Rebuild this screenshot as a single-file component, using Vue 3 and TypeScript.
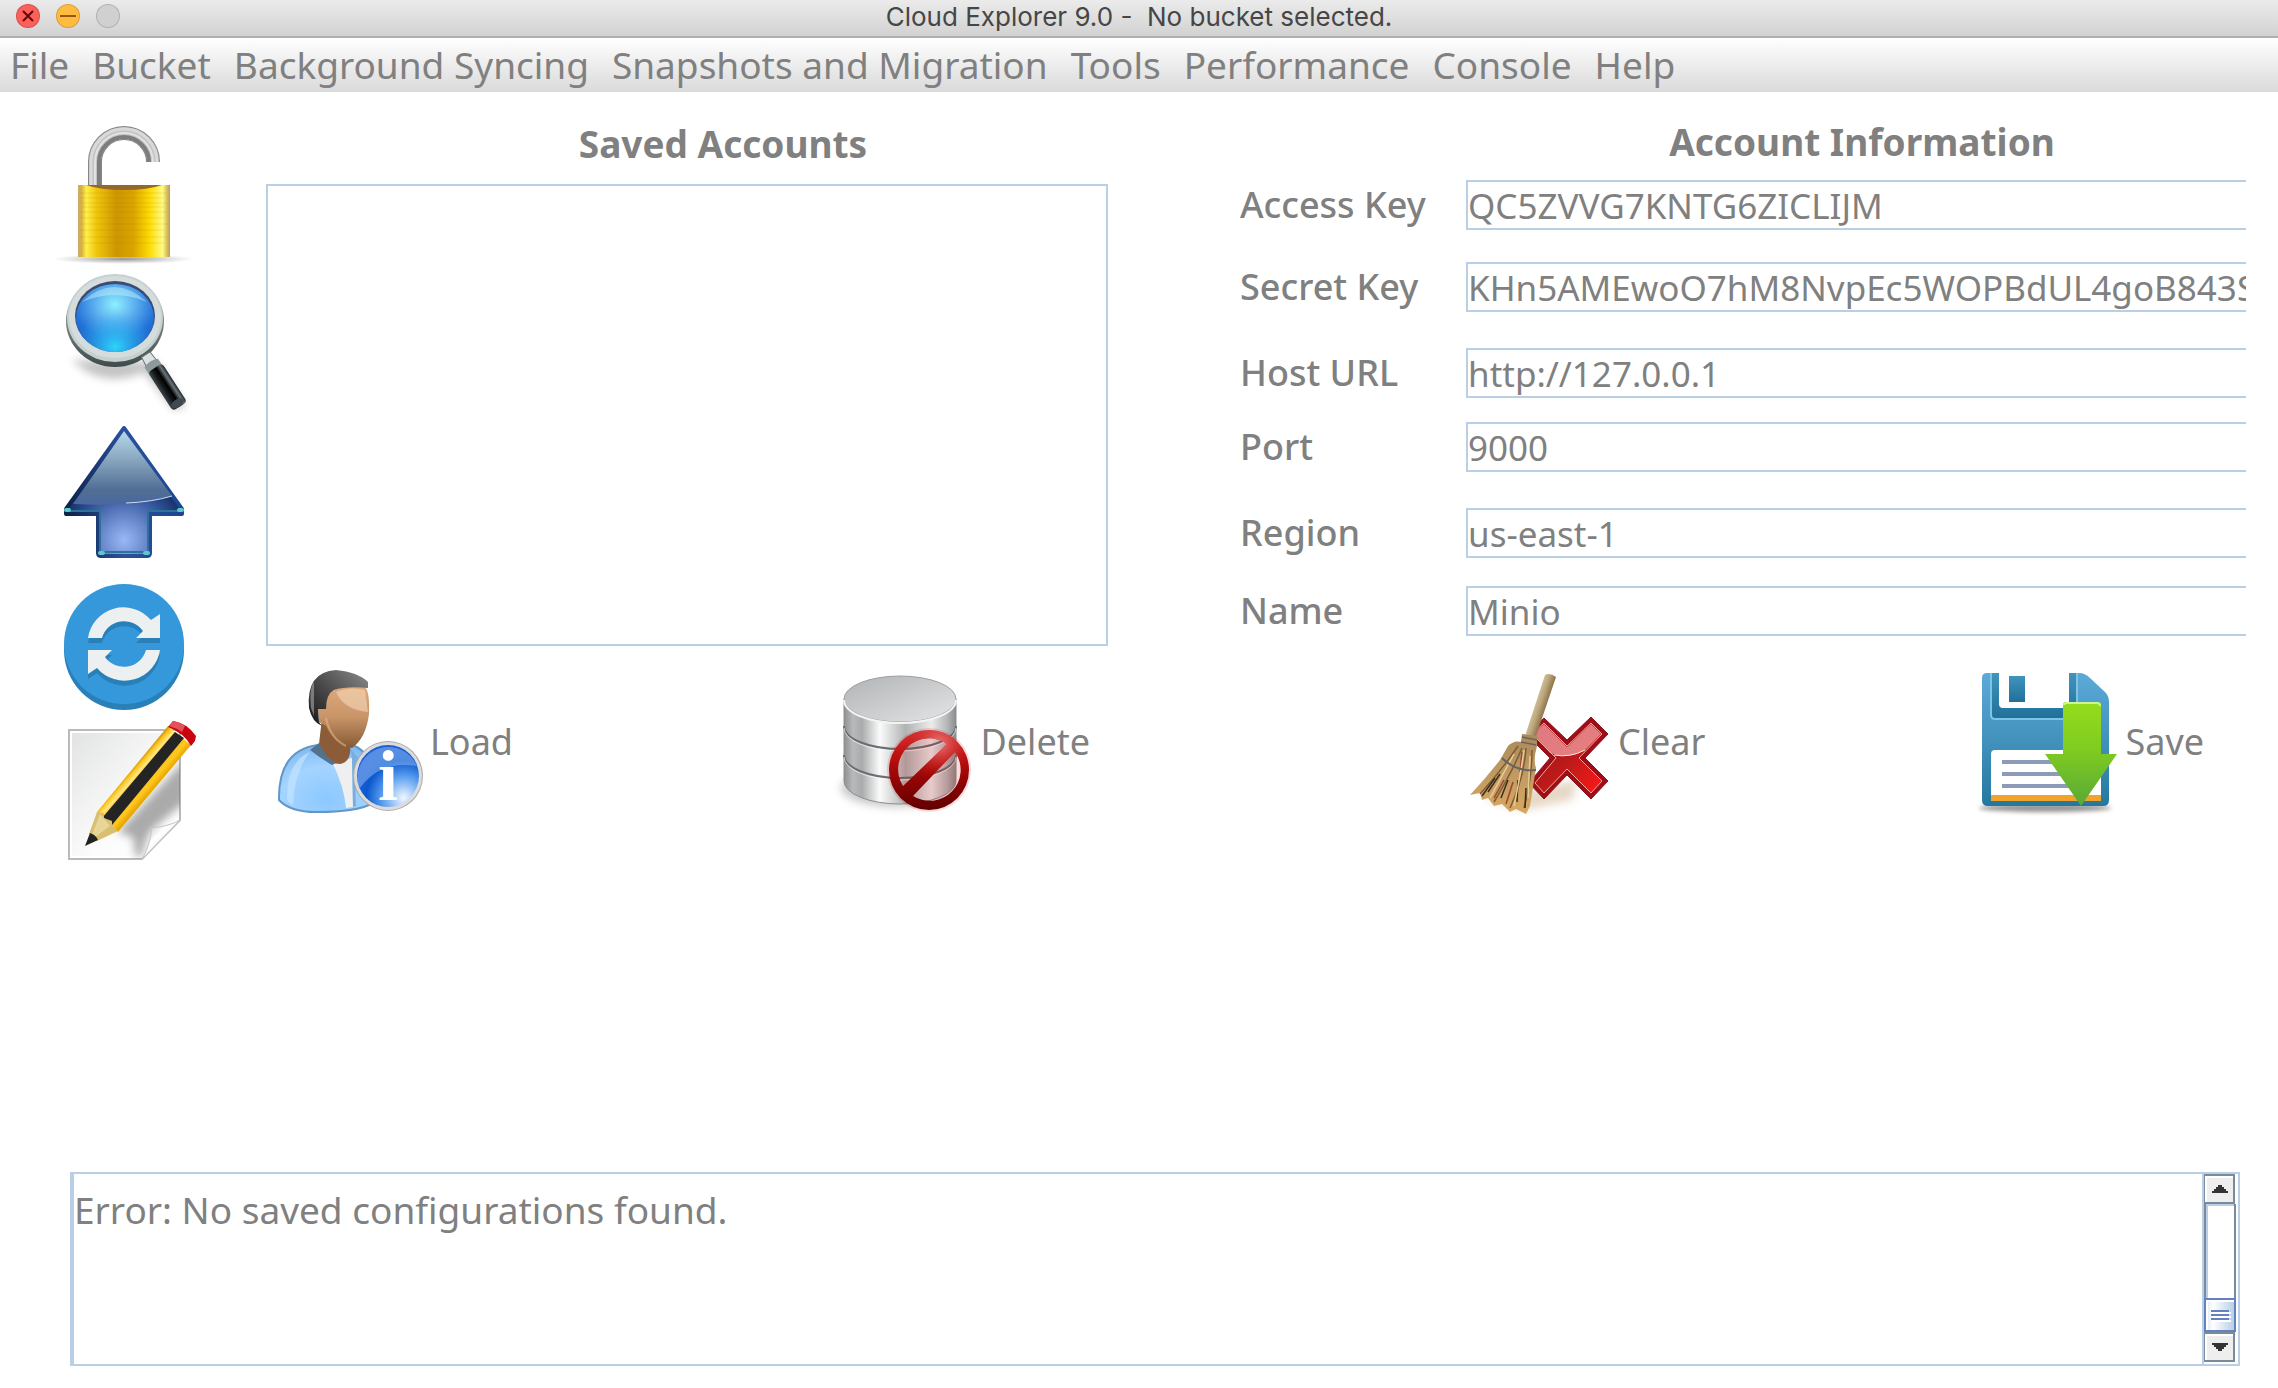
<script setup lang="ts">
import { reactive, ref } from 'vue'

interface Field {
  id: string
  label: string
}

const menus: string[] = [
  'File',
  'Bucket',
  'Background Syncing',
  'Snapshots and Migration',
  'Tools',
  'Performance',
  'Console',
  'Help',
]

const fields: Field[] = [
  { id: 'access', label: 'Access Key' },
  { id: 'secret', label: 'Secret Key' },
  { id: 'host', label: 'Host URL' },
  { id: 'port', label: 'Port' },
  { id: 'region', label: 'Region' },
  { id: 'name', label: 'Name' },
]

const account = reactive<Record<string, string>>({
  access: 'QC5ZVVG7KNTG6ZICLIJM',
  secret: 'KHn5AMEwoO7hM8NvpEc5WOPBdUL4goB843S',
  host: 'http://127.0.0.1',
  port: '9000',
  region: 'us-east-1',
  name: 'Minio',
})

const log = ref('Error: No saved configurations found.')

function clearFields(): void {
  for (const field of fields) account[field.id] = ''
}
</script>

<template>
  <div class="window">
    <header class="titlebar">
      <div class="lights">
        <button class="light close" type="button" aria-label="Close">
          <svg viewBox="0 0 24 24"><path d="M7 7 17 17M17 7 7 17" /></svg>
        </button>
        <button class="light minimise" type="button" aria-label="Minimise">
          <svg viewBox="0 0 24 24"><path d="M4 12H20" /></svg>
        </button>
        <button class="light zoom" type="button" aria-label="Zoom" disabled></button>
      </div>
      <h1 class="title">Cloud Explorer 9.0 -&nbsp; No bucket selected.</h1>
    </header>

    <nav class="menubar">
      <button v-for="menu in menus" :key="menu" class="menu" type="button">{{ menu }}</button>
    </nav>

    <main class="content">
      <aside class="tools">
        <button class="tool" type="button" aria-label="Accounts">
          <svg class="icon" viewBox="0 0 148 148">
            <defs>
              <linearGradient id="brass" x1="0" x2="1" y1="0" y2="0">
                <stop offset="0" stop-color="#c9ab68" />
                <stop offset=".04" stop-color="#d8b23c" />
                <stop offset=".09" stop-color="#fff04c" />
                <stop offset=".2" stop-color="#f0c60c" />
                <stop offset=".42" stop-color="#cb9600" />
                <stop offset=".6" stop-color="#d9a400" />
                <stop offset=".78" stop-color="#fddc04" />
                <stop offset=".92" stop-color="#fffc86" />
                <stop offset=".96" stop-color="#e0c65a" />
                <stop offset="1" stop-color="#b99a68" />
              </linearGradient>
              <radialGradient id="floor">
                <stop offset="0" stop-color="#777" stop-opacity=".8" />
                <stop offset="1" stop-color="#999" stop-opacity="0" />
              </radialGradient>
            </defs>
            <ellipse cx="71" cy="139" rx="71" ry="5" fill="url(#floor)" />
            <g fill="none">
              <path d="M43 68V42A29 29 0 0 1 101 42" stroke="#858585" stroke-width="14" />
              <path d="M43 68V42A29 29 0 0 1 101 42" stroke="#c3c3c3" stroke-width="12" />
              <path d="M39 68V42A33 33 0 0 1 105 42" stroke="#d9d9d9" stroke-width="3" />
              <path d="M47 68V42A25 25 0 0 1 97 42" stroke="#7d7d7d" stroke-width="4" />
              <path d="M43 68V42A29 29 0 0 1 101 42" stroke="#e2e2e2" stroke-width="2" />
            </g>
            <path d="M26 65H118V137H26Z" fill="url(#brass)" />
            <path d="M28 73H115M28 78H112M28 83H115M30 87H112M28 92H115M28 98H112M28 104H115M28 110H112M28 117H115M30 123H112" stroke="#a87800" stroke-opacity=".16" />
            <path d="M34 65H110Q96 70 72 70T34 65Z" fill="#94682a" />
          </svg>
        </button>
        <button class="tool" type="button" aria-label="Search">
          <svg class="icon" viewBox="0 0 148 148">
            <defs>
              <radialGradient id="lens" cx=".5" cy=".3" r=".72">
                <stop offset="0" stop-color="#8df0ff" />
                <stop offset=".32" stop-color="#63b6f0" />
                <stop offset=".72" stop-color="#2272d8" />
                <stop offset="1" stop-color="#1c5fc0" />
              </radialGradient>
              <radialGradient id="lensLow" cx=".5" cy=".92" r=".5">
                <stop offset="0" stop-color="#2fd4fb" />
                <stop offset="1" stop-color="#2fb4f5" stop-opacity="0" />
              </radialGradient>
              <linearGradient id="rim" x1="0" x2="0" y1="0" y2="1">
                <stop offset="0" stop-color="#a9b3b3" />
                <stop offset=".6" stop-color="#6f7a7a" />
                <stop offset="1" stop-color="#3f4a4c" />
              </linearGradient>
              <linearGradient id="grip" x1="0" x2="1" y1="0" y2="0">
                <stop offset="0" stop-color="#3c4548" />
                <stop offset=".3" stop-color="#14181a" />
                <stop offset=".55" stop-color="#000" />
                <stop offset=".8" stop-color="#69757b" />
                <stop offset="1" stop-color="#20282b" />
              </linearGradient>
              <filter id="haze" x="-30%" y="-30%" width="160%" height="160%">
                <feGaussianBlur stdDeviation="4" />
              </filter>
              <filter id="mist" x="-10%" y="-50%" width="120%" height="200%">
                <feGaussianBlur stdDeviation="2" />
              </filter>
            </defs>
            <path d="M20 92Q50 122 92 104L122 142 134 138 104 94Z" fill="#555" opacity=".35" filter="url(#haze)" />
            <ellipse cx="63" cy="53" rx="49" ry="46" fill="url(#rim)" />
            <ellipse cx="63" cy="50" rx="48" ry="44" fill="#c6d0cf" />
            <ellipse cx="63" cy="49" rx="46" ry="41" fill="#d5dddc" />
            <ellipse cx="63" cy="48" rx="40" ry="35" fill="#3c4a74" />
            <ellipse cx="63" cy="50" rx="39" ry="34" fill="url(#lens)" />
            <ellipse cx="63" cy="50" rx="39" ry="34" fill="url(#lensLow)" />
            <path d="M30 34Q62 4 95 34Q62 20 30 34Z" fill="#c5f6ff" opacity=".45" />
            <g transform="rotate(-33 96 90)">
              <path d="M91 86H101L102 96H90Z" fill="#dce2e2" stroke="#6a7475" />
              <path d="M88 96Q96 92 104 96V106H88Z" fill="#8e999b" />
              <rect x="88" y="102" width="17" height="46" rx="4" fill="url(#grip)" />
              <ellipse cx="96" cy="144" rx="7" ry="4" fill="#3e4a4f" />
            </g>
          </svg>
        </button>
        <button class="tool" type="button" aria-label="Upload">
          <svg class="icon" viewBox="0 0 148 148">
            <defs>
              <linearGradient id="gloss" x1="0" x2="0" y1="0" y2="1">
                <stop offset="0" stop-color="#b4d8ea" />
                <stop offset=".35" stop-color="#8eabc4" />
                <stop offset=".8" stop-color="#506e94" />
                <stop offset="1" stop-color="#4a689e" />
              </linearGradient>
              <radialGradient id="stem" gradientUnits="userSpaceOnUse" cx="72" cy="124" r="66">
                <stop offset="0" stop-color="#98b8f6" />
                <stop offset=".4" stop-color="#6080c4" />
                <stop offset=".7" stop-color="#33549a" />
                <stop offset="1" stop-color="#142c62" />
              </radialGradient>
              <linearGradient id="edge" x1="0" x2="1" y1="0" y2="0">
                <stop offset="0" stop-color="#0e2248" />
                <stop offset=".5" stop-color="#2a50a0" />
                <stop offset="1" stop-color="#1c4690" />
              </linearGradient>
            </defs>
            <path d="M72 12 130 93V98H98V137Q98 140 95 140H49Q46 140 46 137V98H14V93Z" fill="url(#stem)" stroke="url(#edge)" stroke-width="4" stroke-linejoin="round" />
            <path d="M72 15 120 80Q80 91 21 88Z" fill="url(#gloss)" />
            <path d="M120 80Q100 86 74 87" fill="none" stroke="#c8dcf4" />
            <path d="M15 95H48V136H96V95H129" fill="none" stroke="#2d7398" stroke-width="2" />
            <path d="M14 94H17M127 94H130M48 137H51M93 137H96" stroke="#5cc8cc" stroke-width="4" stroke-linecap="round" />
          </svg>
        </button>
        <button class="tool" type="button" aria-label="Refresh">
          <svg class="icon" viewBox="0 -4 148 148">
            <circle cx="72" cy="82" r="60" fill="#2980b9" />
            <circle cx="72" cy="76" r="60" fill="#3498db" />
            <g fill="#2980b9">
              <path d="M36 75A36 36 0 0 1 99 57L108 51V75H84L91 68A23 23 0 0 0 50 75Z" />
              <path d="M108 87A36 36 0 0 1 45 105L36 111V87H60L53 94A23 23 0 0 0 94 87Z" />
            </g>
            <g fill="#ecf0f1">
              <path d="M36 70A36 36 0 0 1 99 52L108 46V70H84L91 63A23 23 0 0 0 50 70Z" />
              <path d="M108 82A36 36 0 0 1 45 100L36 106V82H60L53 89A23 23 0 0 0 94 82Z" />
            </g>
          </svg>
        </button>
        <button class="tool" type="button" aria-label="Edit">
          <svg class="icon" viewBox="0 -4 148 148">
            <defs>
              <linearGradient id="paper" x1="0" x2="1" y1="0" y2="1">
                <stop offset="0" stop-color="#e2e4e3" />
                <stop offset=".6" stop-color="#fcfcfc" />
                <stop offset="1" stop-color="#fff" />
              </linearGradient>
              <linearGradient id="curl" x1="0" x2="1" y1="0" y2="1">
                <stop offset="0" stop-color="#9a9a9a" />
                <stop offset=".4" stop-color="#fff" />
                <stop offset="1" stop-color="#d4d4d4" />
              </linearGradient>
              <linearGradient id="barrel" gradientUnits="userSpaceOnUse" x1="80" y1="53" x2="102" y2="72">
                <stop offset="0" stop-color="#d89c10" />
                <stop offset=".1" stop-color="#ffc81e" />
                <stop offset=".25" stop-color="#ffe88a" />
                <stop offset=".35" stop-color="#f4b80a" />
                <stop offset=".8" stop-color="#ffc820" />
                <stop offset="1" stop-color="#e8a800" />
              </linearGradient>
              <clipPath id="sheet"><path d="M17 14H128V104L90 143H17Z" /></clipPath>
            </defs>
            <path d="M17 14H128V104L90 143H17Z" fill="#fff" stroke="#b9bab9" stroke-width="2" />
            <path d="M20 17H125V102L89 140H20Z" fill="url(#paper)" />
            <g clip-path="url(#sheet)">
              <path d="M66 116 140 36 138 82 102 112Q94 118 90 142L82 138Q86 118 70 118Z" fill="#666" opacity=".55" filter="url(#haze)" />
            </g>
            <path d="M128 104Q118 110 100 112Q98 130 90 143Z" fill="url(#curl)" stroke="#c2c6c6" />
            <path d="M45 96 116 10 139 29 66 116Z" fill="url(#barrel)" />
            <path d="M51 101 123 16 132 22 60 109Z" fill="#242424" />
            <path d="M45 96 52 97 52 102 60 105 60 110 66 115 45 125 37 118Z" fill="#d9c070" />
            <path d="M48 98 40 119 43 121 58 110Z" fill="#ece0a8" opacity=".7" />
            <path d="M38 117Q44 119 46 124L33 130Z" fill="#222" />
            <path d="M116 11 121 5Q135 7 144 20L143 25 139 30Q132 17 116 11Z" fill="#c8040e" />
            <path d="M117 10 121 5Q128 6 133 10L130 16Q124 12 117 10Z" fill="#e2525a" />
          </svg>
        </button>
      </aside>

      <section class="saved">
        <h2 class="heading">Saved Accounts</h2>
        <select class="accounts" size="8" aria-label="Saved Accounts"></select>
        <div class="actions">
          <button class="action" type="button">
            <svg class="icon" viewBox="0 0 148 148">
              <defs>
                <linearGradient id="skin" x1="0" x2="0" y1="0" y2="1">
                  <stop offset="0" stop-color="#deaa7c" />
                  <stop offset=".5" stop-color="#c89468" />
                  <stop offset="1" stop-color="#865a34" />
                </linearGradient>
                <radialGradient id="shirt" cx=".5" cy=".8" r=".8">
                  <stop offset="0" stop-color="#8cc8ff" />
                  <stop offset=".6" stop-color="#a4d4ff" />
                  <stop offset="1" stop-color="#80baf0" />
                </radialGradient>
                <linearGradient id="hair" x1="0" x2="1" y1="1" y2="0">
                  <stop offset="0" stop-color="#161616" />
                  <stop offset=".5" stop-color="#4c4c4c" />
                  <stop offset="1" stop-color="#8c8c8c" />
                </linearGradient>
                <radialGradient id="info" cx=".75" cy=".85" r=".75">
                  <stop offset="0" stop-color="#f0f8ff" />
                  <stop offset=".45" stop-color="#5ea0f0" />
                  <stop offset=".8" stop-color="#0a58d0" />
                  <stop offset="1" stop-color="#1c60d4" />
                </radialGradient>
              </defs>
              <path d="M3 132Q2 82 42 77H76Q100 84 100 132Q90 144 40 144Q14 144 3 132Z" fill="url(#shirt)" stroke="#6298c8" stroke-width="2" />
              <path d="M11 132Q10 94 34 84Q18 104 17 138Z" fill="#c2e4ff" opacity=".7" />
              <path d="M56 94 76 90 77 139 70 140Q68 118 56 94Z" fill="#efefef" />
              <path d="M76 90 74 80 84 92Q78 112 80 138L77 139Z" fill="#78aee0" />
              <path d="M46 50 43 76Q50 96 64 96Q76 94 74 76Z" fill="#8c5c38" />
              <path d="M34 82 43 75Q50 90 60 95L56 97Q44 90 34 82Z" fill="#53728e" />
              <path d="M42 40Q50 16 88 18Q94 22 93 46Q90 70 76 80Q58 76 50 58L43 54Z" fill="url(#skin)" />
              <path d="M60 24Q74 18 89 22L92 44Q68 42 60 24Z" fill="#f2d2b4" opacity=".65" />
              <path d="M50 50Q54 70 70 78" fill="none" stroke="#f0c090" stroke-opacity=".5" stroke-width="2" />
              <path d="M33 40Q30 4 60 2Q82 4 92 14V20Q70 18 58 22Q50 26 50 41H42L43 54 46 58Q36 54 33 40Z" fill="url(#hair)" />
              <path d="M35 40Q33 20 38 14L38 48Z" fill="#aaa" opacity=".6" />
              <circle cx="112" cy="108" r="35" fill="#ababab" />
              <circle cx="112" cy="108" r="34" fill="#dcdcdc" />
              <circle cx="112" cy="108" r="31" fill="url(#info)" />
              <path d="M82 116A31 31 0 0 1 141 98Q104 92 84 120Z" fill="#8ab6f0" opacity=".55" />
              <text x="112" y="132" text-anchor="middle" class="info-mark">i</text>
            </svg>
            <span>Load</span>
          </button>
          <button class="action" type="button">
            <svg class="icon" viewBox="0 0 148 148">
              <defs>
                <linearGradient id="drum" x1="0" x2="1" y1="0" y2="0">
                  <stop offset="0" stop-color="#8e9091" />
                  <stop offset=".08" stop-color="#b8b9ba" />
                  <stop offset=".16" stop-color="#a9abac" />
                  <stop offset=".32" stop-color="#fbfbfb" />
                  <stop offset=".55" stop-color="#b0b2b3" />
                  <stop offset=".78" stop-color="#ececec" />
                  <stop offset=".92" stop-color="#b4b6b7" />
                  <stop offset="1" stop-color="#8a8c8d" />
                </linearGradient>
                <linearGradient id="lid" x1="0" x2="1" y1="0" y2="1">
                  <stop offset="0" stop-color="#b0b3b5" />
                  <stop offset="1" stop-color="#e4e5e6" />
                </linearGradient>
                <linearGradient id="ban" x1="0" x2="0" y1="0" y2="1">
                  <stop offset="0" stop-color="#d83434" />
                  <stop offset=".3" stop-color="#c01010" />
                  <stop offset=".65" stop-color="#900404" />
                  <stop offset="1" stop-color="#600000" />
                </linearGradient>
                <radialGradient id="sheen" gradientUnits="userSpaceOnUse" cx="112" cy="76" r="36">
                  <stop offset="0" stop-color="#ee7878" />
                  <stop offset="1" stop-color="#c01010" stop-opacity="0" />
                </radialGradient>
              </defs>
              <ellipse cx="70" cy="120" rx="56" ry="19" fill="#777" opacity=".4" filter="url(#haze)" />
              <path d="M17 31V113A56 23 0 0 0 129 113V31Z" fill="url(#drum)" stroke="#8c8e8f" />
              <ellipse cx="73" cy="31" rx="56" ry="23" fill="url(#lid)" stroke="#9c9ea0" />
              <path d="M17 32A56 23 0 0 0 129 32" fill="none" stroke="#f4f4f4" stroke-width="2" />
              <path d="M17 58A56 23 0 0 0 129 58M17 87A56 23 0 0 0 129 87" fill="none" stroke="#6c6e70" stroke-width="2" />
              <path d="M17 60A56 23 0 0 0 129 60M17 89A56 23 0 0 0 129 89" fill="none" stroke="#fafafa" stroke-opacity=".7" />
              <circle cx="102" cy="102" r="42" fill="#c00" opacity=".14" />
              <path d="M102 62A40 40 0 1 1 102 142A40 40 0 1 1 102 62ZM120 76A31 31 0 0 0 76 118ZM128 84 86 128A31 31 0 0 0 128 84Z" fill="url(#ban)" />
              <path d="M102 62A40 40 0 1 1 102 142A40 40 0 1 1 102 62ZM120 76A31 31 0 0 0 76 118ZM128 84 86 128A31 31 0 0 0 128 84Z" fill="url(#sheen)" />
            </svg>
            <span>Delete</span>
          </button>
        </div>
      </section>

      <form class="details" @submit.prevent>
        <h2 class="heading">Account Information</h2>
        <div class="rows">
          <div v-for="field in fields" :key="field.id" class="row">
            <label class="label" :for="field.id">{{ field.label }}</label>
            <input :id="field.id" v-model="account[field.id]" class="field" type="text" spellcheck="false" />
          </div>
        </div>
        <div class="actions">
          <button class="action" type="button" @click="clearFields">
            <svg class="icon" viewBox="0 0 148 148">
              <defs>
                <linearGradient id="straw" x1="0" x2="0" y1="0" y2="1">
                  <stop offset="0" stop-color="#a98a5c" />
                  <stop offset=".5" stop-color="#c09a62" />
                  <stop offset="1" stop-color="#d8a860" />
                </linearGradient>
                <linearGradient id="pole" gradientUnits="userSpaceOnUse" x1="70" y1="35" x2="82" y2="39">
                  <stop offset="0" stop-color="#d4c4a0" />
                  <stop offset=".5" stop-color="#bca67c" />
                  <stop offset="1" stop-color="#8c7248" />
                </linearGradient>
                <linearGradient id="cross" x1="0" x2="1" y1="0" y2="1">
                  <stop offset="0" stop-color="#a80c18" />
                  <stop offset=".5" stop-color="#b81a1a" />
                  <stop offset="1" stop-color="#ff1818" />
                </linearGradient>
              </defs>
              <path d="M20 130 60 142 108 132 114 112Z" fill="#c8a880" opacity=".45" filter="url(#haze)" />
              <path d="M80 50 103 72 127 49 144 66 121 90 144 113 127 131 103 107 80 131 65 115 86 90 62 66Z" fill="#a00c18" stroke="#8c1620" />
              <path d="M80 55 103 78 127 55 138 66 115 90 138 113 127 125 103 101 80 125 71 115 92 90 68 66Z" fill="url(#cross)" stroke="#f0a890" />
              <path d="M80 56 103 79 127 56 137 66 121 82Q104 92 86 85L69 66Z" fill="#f6a8ac" opacity=".7" />
              <path d="M121 82Q106 90 90 87" fill="none" stroke="#ffe4e4" />
              <path d="M81 7Q86 4 92 9L72 68H61Z" fill="url(#pole)" />
              <path d="M58 66 73 68V78Q69 92 72 100L66 138 62 146 52 141 46 144 38 136 30 138 24 130 18 132 16 125 6 127Q22 110 36 92L44 78Q50 72 57 74Z" fill="url(#straw)" />
              <g fill="none" stroke-width="1.5">
                <path d="M54 78Q38 102 16 126M58 80Q48 104 30 134M62 80Q60 110 46 140M68 82Q68 110 60 140" stroke="#7c5c34" />
                <path d="M36 106 24 124M44 112 37 130M54 112 53 134M31 110 18 128M62 120 61 140" stroke="#3c2c1c" />
                <path d="M40 112 30 130M49 114 42 136M58 84 56 104" stroke="#9c4434" />
                <path d="M60 82Q56 110 50 138M50 86Q38 108 26 130M66 88 64 130" stroke="#e8cc94" />
                <path d="M38 90Q52 104 72 102" stroke="#646464" stroke-width="2" />
                <path d="M58 69 73 72M57 74 72 77" stroke="#6c6458" />
              </g>
            </svg>
            <span>Clear</span>
          </button>
          <button class="action" type="submit">
            <svg class="icon" viewBox="0 0 148 148">
              <defs>
                <linearGradient id="disk" x1="0" x2="0" y1="0" y2="1">
                  <stop offset="0" stop-color="#5caad8" />
                  <stop offset=".5" stop-color="#4292bc" />
                  <stop offset="1" stop-color="#2478a0" />
                </linearGradient>
                <linearGradient id="slot" x1="0" x2="0" y1="0" y2="1">
                  <stop offset="0" stop-color="#4294bc" />
                  <stop offset="1" stop-color="#20709a" />
                </linearGradient>
                <linearGradient id="leaf" x1="0" x2="0" y1="0" y2="1">
                  <stop offset="0" stop-color="#94dc1c" />
                  <stop offset=".45" stop-color="#80cc20" />
                  <stop offset="1" stop-color="#58a838" />
                </linearGradient>
              </defs>
              <ellipse cx="74" cy="140" rx="66" ry="4" fill="#666" opacity=".7" filter="url(#mist)" />
              <path d="M16 5H108Q114 5 119 10L134 24Q138 28 138 34V132Q138 138 132 138H17Q11 138 11 132V10Q11 5 16 5Z" fill="url(#disk)" />
              <path d="M20 5V47Q20 51 24 51H106V5" fill="url(#slot)" />
              <path d="M20 5V47Q20 51 24 51H106V5" fill="none" stroke="#7cc4e8" stroke-width="2" />
              <path d="M28 4H98V40H32Q28 40 28 36Z" fill="#fff" />
              <path d="M38 8H54V34H38Z" fill="url(#slot)" />
              <path d="M24 82H126Q130 82 130 86V127H20V86Q20 82 24 82Z" fill="#fff" />
              <path d="M20 127H130V133H20Z" fill="#f0a42c" />
              <path d="M31 94H100M31 106H100M31 118H100" stroke="#8c9cb8" stroke-width="4" />
              <path d="M95 34H127Q130 34 130 37V86H146L110 138 74 86H92V37Q92 34 95 34Z" fill="url(#leaf)" />
              <path d="M93 37Q93 35 96 35H126Q129 35 129 38" fill="none" stroke="#ccf690" stroke-width="2" />
            </svg>
            <span>Save</span>
          </button>
        </div>
      </form>
    </main>

    <section class="console">
      <textarea v-model="log" class="log" aria-label="Messages" readonly spellcheck="false"></textarea>
      <div class="scrollbar">
        <button class="step" type="button" aria-label="Scroll up">
          <svg viewBox="0 0 16 8" shape-rendering="crispEdges"><path d="M6 0H10V2H12V4H14V6H16V8H0V6H2V4H4V2H6Z" /></svg>
        </button>
        <div class="track"></div>
        <div class="thumb"><i></i><i></i><i></i></div>
        <button class="step" type="button" aria-label="Scroll down">
          <svg viewBox="0 0 16 8" shape-rendering="crispEdges"><path d="M0 0H16V2H14V4H12V6H10V8H6V6H4V4H2V2H0Z" /></svg>
        </button>
      </div>
    </section>
  </div>
</template>

<style>
body {
  background: #fff;
}
</style>

<style scoped>
.window {
  display: flex;
  flex-direction: column;
  min-height: 100vh;
  box-sizing: border-box;
  overflow: hidden;
  color: #808080;
  font-family: 'Noto Sans', sans-serif;
  font-size: 37px;
  line-height: 48px;
}

button {
  margin: 0;
  padding: 0;
  border: 0;
  background: none;
  color: inherit;
  font: inherit;
}

.titlebar {
  display: grid;
  grid-template-columns: 1fr auto 1fr;
  height: 38px;
  box-sizing: border-box;
  border-bottom: 2px solid #b0b0b0;
  background: linear-gradient(#ebebeb, #d2d2d2);
}

.lights {
  display: flex;
  gap: 16px;
  padding: 4px 16px;
}

.light {
  width: 24px;
  height: 24px;
  box-sizing: border-box;
  border-radius: 50%;
  box-shadow: inset 0 0 0 1px rgba(0, 0, 0, 0.15);
}

.light svg {
  display: block;
  width: 24px;
  height: 24px;
  fill: none;
  stroke-width: 2;
}

.close {
  background: #fc605b;
}

.close svg {
  stroke: #640808;
}

.minimise {
  background: #fdbc40;
}

.minimise svg {
  stroke: #985712;
}

.zoom {
  background: #d0d0d0;
}

.title {
  margin: 0;
  color: #464646;
  font-family: Inter, sans-serif;
  font-size: 26px;
  font-weight: 400;
  line-height: 34px;
}

.menubar {
  display: flex;
  gap: 23px;
  height: 54px;
  padding: 0 10px;
  background: linear-gradient(#fff, #dadada);
}

.menu {
  line-height: 54px;
  white-space: nowrap;
}

.content {
  display: grid;
  grid-template-columns: 214px minmax(0, 842fr) calc(132px + (100% - 346px) * 1006 / 1848);
  align-items: start;
  padding: 0 32px 0 52px;
}

.tools {
  display: flex;
  flex-direction: column;
  align-items: flex-start;
  padding-top: 28px;
}

.icon {
  display: block;
  flex: none;
  width: 148px;
  height: 148px;
}

.saved {
  padding-top: 28px;
}

.heading {
  margin: 0;
  font-size: 37px;
  font-weight: 700;
  text-align: center;
}

.saved .heading {
  padding-left: 72px;
}

.accounts {
  display: block;
  width: 100%;
  height: 462px;
  margin: 16px 0 22px;
  border: 2px solid #b8cfe5;
  border-radius: 0;
  background: #fff;
  outline: none;
}

.details {
  margin-left: 132px;
  padding-top: 26px;
}

.details .heading {
  padding-left: 238px;
}

.rows {
  margin: 14px 0 32px;
}

.row {
  display: flex;
}

.row:nth-child(2) {
  margin-top: 32px;
}

.row:nth-child(3),
.row:nth-child(5) {
  margin-top: 36px;
}

.row:nth-child(4) {
  margin-top: 24px;
}

.row:nth-child(6) {
  margin-top: 28px;
}

.label {
  flex: none;
  width: 226px;
  font-size: 36px;
  font-weight: 500;
  line-height: 50px;
}

.field {
  flex: 1;
  min-width: 0;
  height: 50px;
  box-sizing: border-box;
  padding: 0;
  border: 2px solid #b8cfe5;
  border-right: 0;
  border-radius: 0;
  background: #fff;
  color: inherit;
  font: inherit;
  font-size: 35px;
  outline: none;
}

.actions {
  display: flex;
  justify-content: space-between;
  padding: 0 18px 0 10px;
}

.details .actions {
  padding: 0 42px 0 224px;
}

.action {
  display: flex;
  align-items: center;
  gap: 6px;
  font-size: 36px;
}

.info-mark {
  fill: #fff;
  font-family: 'Liberation Serif', serif;
  font-size: 72px;
  font-weight: 700;
}

.console {
  display: flex;
  height: 194px;
  margin: auto 38px 22px 70px;
  box-sizing: border-box;
  border: 2px solid #b8cfe5;
  border-left-width: 4px;
}

.log {
  flex: 1;
  min-width: 0;
  box-sizing: border-box;
  padding: 12px 0 0;
  border: 0;
  background: #fff;
  color: inherit;
  font: inherit;
  outline: none;
  overflow: hidden;
  resize: none;
}

.scrollbar {
  display: flex;
  flex-direction: column;
  width: 32px;
  padding: 0 2px 2px 0;
  border-left: 2px solid #b8cfe5;
}

.step {
  display: flex;
  align-items: center;
  justify-content: center;
  width: 31px;
  height: 30px;
  padding-left: 2px;
  border: 2px solid #7a8a99;
  border-left-width: 1px;
  background: #eee;
  box-shadow: inset 2px 2px #fff;
}

.step svg {
  width: 16px;
  height: 8px;
  fill: #333;
}

.track {
  flex: 1;
  border: 2px solid #7a8a99;
  border-width: 0 2px;
  background: #fff;
  box-shadow: inset 2px 2px #b8cfe5;
}

.thumb {
  display: flex;
  flex-direction: column;
  align-items: center;
  justify-content: center;
  gap: 2px;
  height: 34px;
  box-sizing: border-box;
  border: 2px solid #6382bf;
  background: linear-gradient(90deg, #dce8f2, #fff 25%, #b8cfe5);
  box-shadow: inset 2px 2px #fff;
}

.thumb i {
  width: 18px;
  height: 2px;
  background: #6382bf;
  box-shadow: 2px 2px #fff;
}
</style>
